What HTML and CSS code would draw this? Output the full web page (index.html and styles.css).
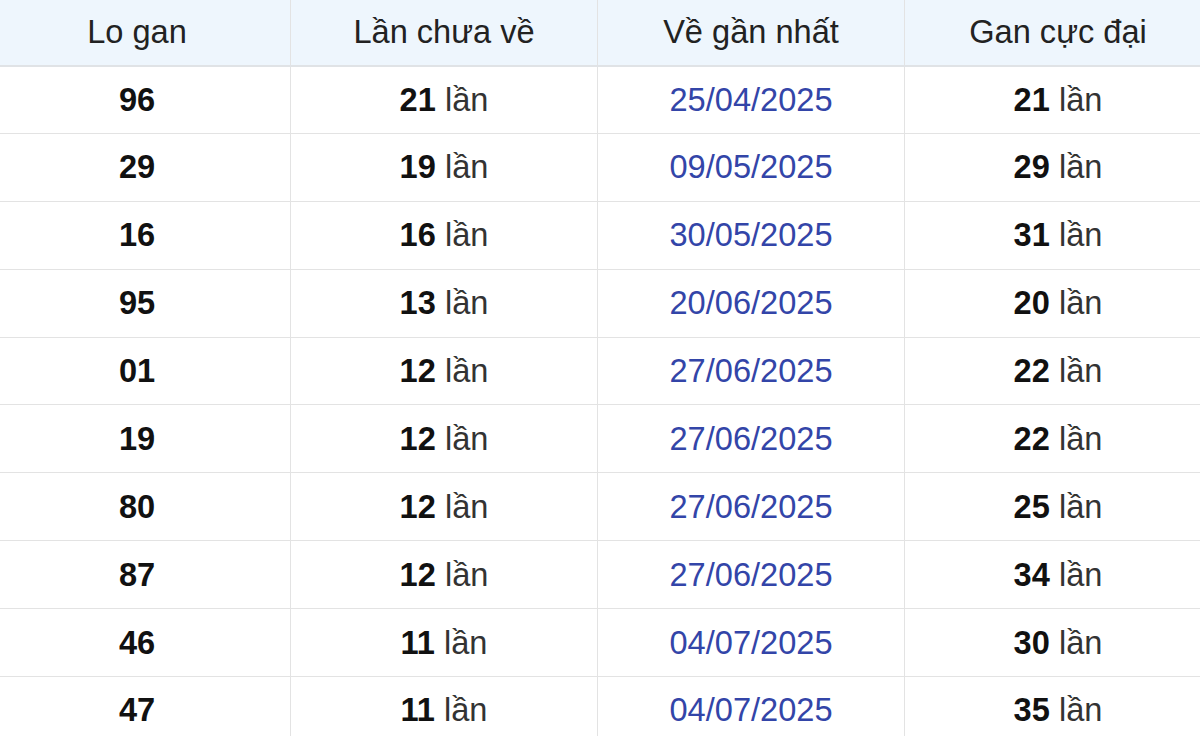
FILE: index.html
```html
<!DOCTYPE html>
<html lang="vi">
<head>
<meta charset="utf-8">
<link rel="stylesheet" href="styles.css">
</head>
<body>
<table class="gan">
  <thead>
    <tr><th>Lo gan</th><th>Lần chưa về</th><th>Về gần nhất</th><th>Gan cực đại</th></tr>
  </thead>
  <tbody>
    <tr><td class="num">96</td><td><b>21</b> lần</td><td class="date">25/04/2025</td><td><b>21</b> lần</td></tr>
    <tr><td class="num">29</td><td><b>19</b> lần</td><td class="date">09/05/2025</td><td><b>29</b> lần</td></tr>
    <tr><td class="num">16</td><td><b>16</b> lần</td><td class="date">30/05/2025</td><td><b>31</b> lần</td></tr>
    <tr><td class="num">95</td><td><b>13</b> lần</td><td class="date">20/06/2025</td><td><b>20</b> lần</td></tr>
    <tr><td class="num">01</td><td><b>12</b> lần</td><td class="date">27/06/2025</td><td><b>22</b> lần</td></tr>
    <tr><td class="num">19</td><td><b>12</b> lần</td><td class="date">27/06/2025</td><td><b>22</b> lần</td></tr>
    <tr><td class="num">80</td><td><b>12</b> lần</td><td class="date">27/06/2025</td><td><b>25</b> lần</td></tr>
    <tr><td class="num">87</td><td><b>12</b> lần</td><td class="date">27/06/2025</td><td><b>34</b> lần</td></tr>
    <tr><td class="num">46</td><td><b>11</b> lần</td><td class="date">04/07/2025</td><td><b>30</b> lần</td></tr>
    <tr><td class="num">47</td><td><b>11</b> lần</td><td class="date">04/07/2025</td><td><b>35</b> lần</td></tr>
  </tbody>
</table>
</body>
</html>
```
FILE: styles.css
```css
html, body {
  margin: 0;
  padding: 0;
  background: #fff;
  overflow: hidden;
}
.gan {
  border-collapse: collapse;
  table-layout: fixed;
  width: 1228px;
  margin-left: -17px;
  margin-top: -1px;
  font-family: "Liberation Sans", Arial, sans-serif;
  font-size: 32.6px;
  color: #333;
}
.gan th, .gan td {
  width: 307px;
  border: 1px solid #e3e3e3;
  text-align: center;
  padding: 0;
  box-sizing: border-box;
}
.gan th {
  height: 66px;
  background: #eef6fd;
  font-weight: normal;
  color: #222;
  border-bottom: 2px solid #e0e3e6;
}
.gan td {
  height: 67.9px;
}
.gan td.num, .gan b {
  font-weight: bold;
  color: #111;
}
.gan td.date {
  color: #3345a8;
}
```
